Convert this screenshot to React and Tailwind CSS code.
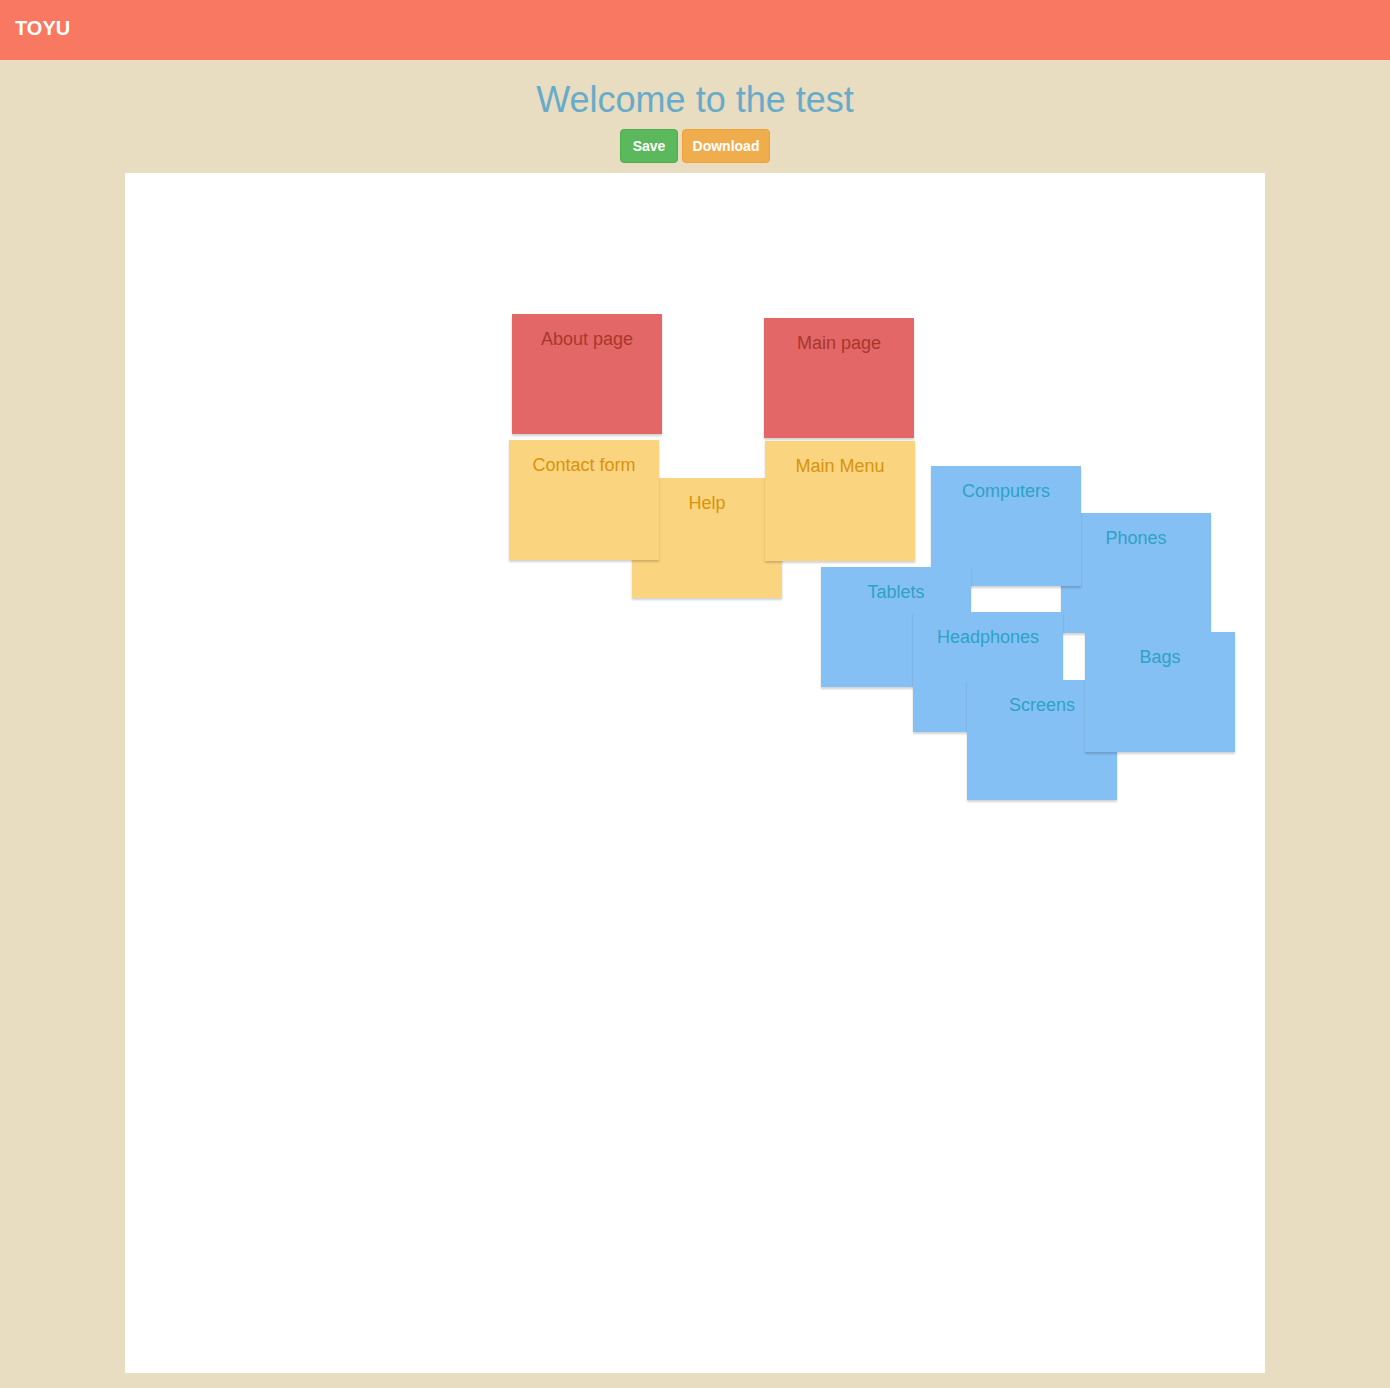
import React from "react";

const notes = [
  { t: "Help", x: 507, y: 305, c: "y" },
  { t: "Contact form", x: 384, y: 267, c: "y" },
  { t: "Main Menu", x: 640, y: 268, c: "y" },
  { t: "About page", x: 387, y: 141, c: "r" },
  { t: "Main page", x: 639, y: 145, c: "r" },
  { t: "Phones", x: 936, y: 340, c: "b" },
  { t: "Computers", x: 806, y: 293, c: "b" },
  { t: "Tablets", x: 696, y: 394, c: "b" },
  { t: "Headphones", x: 788, y: 439, c: "b" },
  { t: "Screens", x: 842, y: 507, c: "b" },
  { t: "Bags", x: 960, y: 459, c: "b" },
];

const colorClass = {
  r: "bg-[#e36767] text-[#a8382c]",
  y: "bg-[#fbd47f] text-[#d8930c]",
  b: "bg-[#85c0f5] text-[#2ea2c4]",
};

export default function App() {
  return (
    <div
      className="min-h-[1388px] bg-[#e8dcc1]"
      style={{ fontFamily: '"Liberation Sans", Arial, sans-serif' }}
    >
      <header className="h-[60px] bg-[#f97862] flex items-start">
        <span className="text-white font-bold text-[20px] leading-none pl-[15px] pt-[18px]">
          TOYU
        </span>
      </header>
      <h1 className="text-center text-[36px] leading-[40px] text-[#66abc9] mt-[20px] mb-[9px]">
        Welcome to the test
      </h1>
      <div className="flex justify-center gap-[4px]">
        <button className="w-[58px] h-[34px] rounded-[4px] bg-[#5cb85c] border border-[#4cae4c] text-white text-[14px] font-bold">
          Save
        </button>
        <button className="w-[88px] h-[34px] rounded-[4px] bg-[#f0ad4e] border border-[#eea236] text-white text-[14px] font-bold">
          Download
        </button>
      </div>
      <div className="relative mx-auto mt-[10px] w-[1140px] h-[1200px] bg-white">
        {notes.map((n) => (
          <div
            key={n.t}
            className={`absolute w-[150px] h-[120px] pt-[15px] text-center text-[18px] leading-[20px] shadow-[0_2px_2px_rgba(0,0,0,0.18)] ${colorClass[n.c]}`}
            style={{ left: n.x, top: n.y }}
          >
            {n.t}
          </div>
        ))}
      </div>
    </div>
  );
}
